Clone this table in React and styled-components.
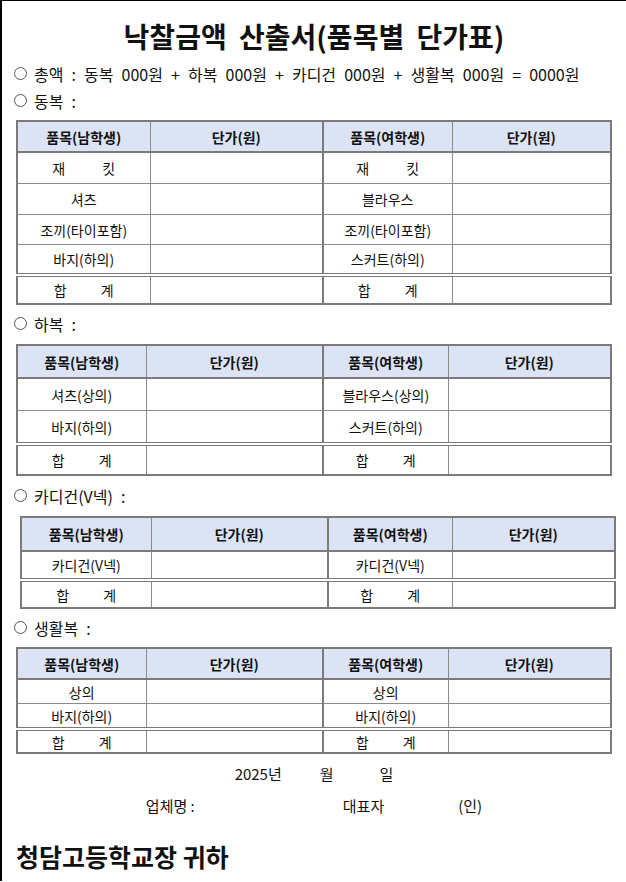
import React from "react";
import styled, { createGlobalStyle } from "styled-components";

const GlobalStyle = createGlobalStyle`
  html, body {
    margin: 0;
    padding: 0;
    background: #fff;
  }
  body {
    font-family: "Noto Sans CJK KR", "Noto Sans", sans-serif;
    color: #111;
  }
`;

const Page = styled.div`
  border-top: 1px solid #000;
  border-left: 2px solid #000;
  min-height: 881px;
  box-sizing: border-box;
  padding-top: 15px;
`;

const Title = styled.h1`
  margin: 0;
  height: 40px;
  line-height: 40px;
  text-align: center;
  font-size: 28px;
  font-weight: 700;
  word-spacing: 6px;
`;

const Line = styled.div`
  display: flex;
  align-items: center;
  height: 27px;
  margin-top: ${(p) => p.$top || 0}px;
  padding-left: 12px;
  font-size: 16px;
  word-spacing: 4.5px;
  white-space: pre;
`;

const Circle = styled.span`
  display: inline-block;
  width: 13px;
  height: 13px;
  border: 1px solid #555;
  border-radius: 50%;
  margin-right: 7px;
  box-sizing: border-box;
`;

const Table = styled.table`
  border-collapse: collapse;
  table-layout: fixed;
  width: 594px;
  margin-top: ${(p) => p.$top}px;
  margin-left: ${(p) => p.$left || 14}px;
  border: 2px solid #7a7a7a;
  font-size: 14px;

  th, td {
    border: 1px solid #8a8a8a;
    text-align: center;
    padding: 0;
    white-space: pre;
  }
  th:nth-child(3), td:nth-child(3) {
    border-left: 2px solid #7a7a7a;
  }
`;

const HeadCell = styled.th`
  height: ${(p) => p.$h}px;
  background: #dce3f5;
  font-weight: 600;
  border-bottom: 2px solid #7a7a7a !important;
`;

const Row = styled.tr`
  td {
    height: ${(p) => p.$h}px;
  }
`;

const TotalRow = styled.tr`
  td {
    height: ${(p) => p.$h}px;
    border-top: 4px double #7a7a7a;
  }
`;

const Spread = styled.span`
  word-spacing: ${(p) => p.$gap}px;
`;

const DateLine = styled.div`
  display: flex;
  justify-content: center;
  align-items: center;
  height: 26px;
  margin-top: ${(p) => p.$top}px;
  font-size: 15px;
`;

const Part = styled.span`
  margin-left: ${(p) => p.$gap || 0}px;
`;

const Closing = styled.div`
  margin-top: 22px;
  padding-left: 14px;
  font-size: 25px;
  font-weight: 700;
  height: 32px;
  line-height: 32px;
`;

const tables = [
  {
    label: "동복 :",
    labelTop: 0,
    top: 6,
    left: 14,
    cols: [133, 173, 129, 159],
    head: 29,
    rows: [
      [["재 킷", 34], ["재 킷", 34], 30],
      ["셔츠", "블라우스", 30],
      ["조끼(타이포함)", "조끼(타이포함)", 29],
      ["바지(하의)", "스커트(하의)", 28],
    ],
    total: 26,
  },
  {
    label: "하복 :",
    labelTop: 5,
    top: 7,
    left: 14,
    cols: [129, 177, 125, 163],
    head: 31,
    rows: [
      ["셔츠(상의)", "블라우스(상의)", 31],
      ["바지(하의)", "스커트(하의)", 31],
    ],
    total: 28,
  },
  {
    label: "카디건(V넥) :",
    labelTop: 6,
    top: 7,
    left: 18,
    cols: [130, 177, 124, 163],
    head: 32,
    rows: [["카디건(V넥)", "카디건(V넥)", 26]],
    total: 25,
  },
  {
    label: "생활복 :",
    labelTop: 5,
    top: 6,
    left: 14,
    cols: [129, 177, 125, 163],
    head: 29,
    rows: [
      ["상의", "상의", 23],
      ["바지(하의)", "바지(하의)", 23],
    ],
    total: 21,
  },
];

function Item({ v }) {
  if (Array.isArray(v)) return <Spread $gap={v[1]}>{v[0]}</Spread>;
  return v;
}

function PriceTable({ t }) {
  return (
    <Table $top={t.top} $left={t.left}>
      <colgroup>
        {t.cols.map((w, i) => (
          <col key={i} style={{ width: w }} />
        ))}
      </colgroup>
      <thead>
        <tr>
          <HeadCell $h={t.head}>품목(남학생)</HeadCell>
          <HeadCell $h={t.head}>단가(원)</HeadCell>
          <HeadCell $h={t.head}>품목(여학생)</HeadCell>
          <HeadCell $h={t.head}>단가(원)</HeadCell>
        </tr>
      </thead>
      <tbody>
        {t.rows.map(([m, f, h], i) => (
          <Row key={i} $h={h}>
            <td><Item v={m} /></td>
            <td></td>
            <td><Item v={f} /></td>
            <td></td>
          </Row>
        ))}
        <TotalRow $h={t.total}>
          <td><Spread $gap={31}>합 계</Spread></td>
          <td></td>
          <td><Spread $gap={31}>합 계</Spread></td>
          <td></td>
        </TotalRow>
      </tbody>
    </Table>
  );
}

export default function App() {
  return (
    <>
      <GlobalStyle />
      <Page>
        <Title>낙찰금액 산출서(품목별 단가표)</Title>
        <Line $top={4}>
          <Circle />
          {"총액 : 동복 000원 + 하복 000원 + 카디건 000원 + 생활복 000원 = 0000원"}
        </Line>
        {tables.map((t, i) => (
          <React.Fragment key={i}>
            <Line $top={t.labelTop}>
              <Circle />
              {t.label}
            </Line>
            <PriceTable t={t} />
          </React.Fragment>
        ))}
        <DateLine $top={6}>
          <Part>2025년</Part>
          <Part $gap={38}>월</Part>
          <Part $gap={46}>일</Part>
        </DateLine>
        <DateLine $top={6}>
          <Part>업체명 :</Part>
          <Part $gap={148}>대표자</Part>
          <Part $gap={74}>(인)</Part>
        </DateLine>
        <Closing>청담고등학교장 귀하</Closing>
      </Page>
    </>
  );
}
